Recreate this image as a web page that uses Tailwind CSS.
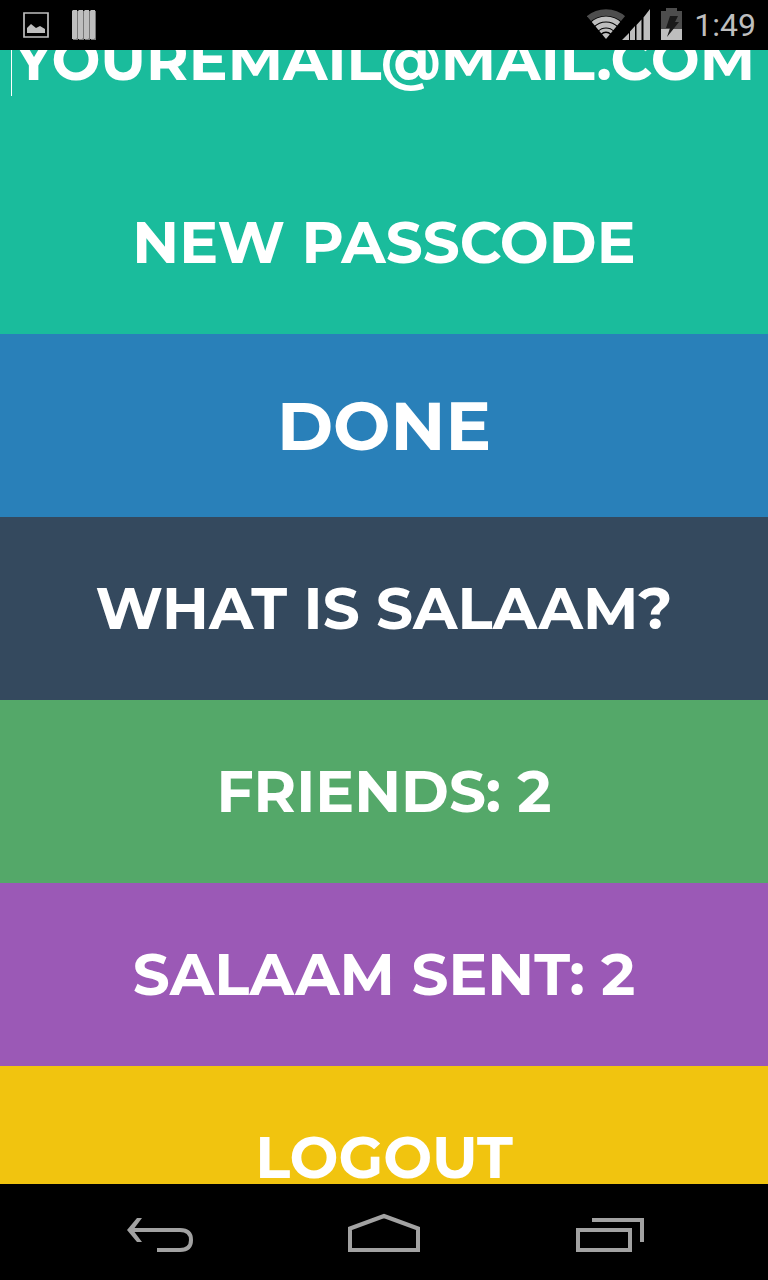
<!DOCTYPE html>
<html lang="en">
<head>
<meta charset="utf-8">
<meta name="viewport" content="width=device-width, initial-scale=1">
<title>Salaam</title>
<script src="https://cdn.jsdelivr.net/npm/@tailwindcss/browser@4"></script>
</head>
<body class="flex h-screen flex-col overflow-hidden bg-black font-['Montserrat','Inter',sans-serif] text-[58px] font-bold text-white">
<header class="flex h-[50px] shrink-0 items-center justify-between pr-3 pl-[23px] text-[#bebebe]">
  <div class="flex items-center gap-[23px]">
    <svg class="h-[26px] w-[26px]" viewBox="0 0 26 26" aria-hidden="true"><path d="M1 1h24v24H1z" fill="none" stroke="currentColor" stroke-width="1.700"/><path d="M4 21v-5l4-4 5 4 4-2 5 3v4z" fill="currentColor"/></svg>
    <svg class="h-[30px] w-[24px]" viewBox="0 0 24 30" aria-hidden="true"><g fill="#777"><path d="M1 1h5v29H1zM7 1h5v29H7zM13 1h5v29h-5zM19 1h5v29h-5z"/></g><g fill="currentColor"><path d="M0 1l1-1h4v28l-1 1H0zM6 1l1-1h4v28l-1 1H6zM12 1l1-1h4v28l-1 1h-4zM18 1l1-1h4v28l-1 1h-4z"/></g></svg>
  </div>
  <div class="flex items-center">
    <svg class="mb-0.5 h-[32px] w-[95px]" viewBox="0 0 95 32" aria-hidden="true">
      <clipPath id="fan"><path d="M19 31L-1 7V0H39V7z"/></clipPath>
      <g clip-path="url(#fan)" fill="none" stroke="currentColor">
        <circle cx="19" cy="31" r="26.500" stroke="#4d4d4d" stroke-width="6.500"/>
        <circle cx="19" cy="31" r="20" stroke-width="4.800"/>
        <circle cx="19" cy="31" r="14" stroke-width="4.800"/>
        <circle cx="19" cy="31" r="9" stroke-width="3.200"/>
        <circle cx="19" cy="31" r="3" stroke-width="6"/>
      </g>
      <path d="M35 32l7-7v7zM43 32V23.500l5-5.500v14zM49.500 32V17l5-5.500V32zM56.500 32V9.500L63 1v31z" fill="currentColor"/>
      <path d="M74 3h5V0h11v3h5v18H74z" fill="#4d4d4d"/>
      <path d="M74 21h21v11H74z" fill="currentColor"/>
      <path d="M83 8h8l-3 6h4L80 29l3-9h-4z" fill="#1a1a1a"/>
    </svg>
    <time class="ml-3 font-['Roboto',sans-serif] text-[32px] leading-10 font-normal">1:49</time>
  </div>
</header>
<main class="min-h-0 flex-1 overflow-hidden">
  <div class="-mt-[82px] flex flex-col">
    <div class="flex h-[183px] items-center bg-[#1abc9c] px-[11px]">
      <input type="email" aria-label="Email" placeholder="YOUREMAIL@MAIL.COM" class="h-[72px] w-full border-l border-white bg-transparent text-center outline-none placeholder:text-white placeholder:opacity-100">
    </div>
    <div class="flex h-[183px] items-center bg-[#1abc9c] px-[11px]">
      <input type="password" aria-label="New passcode" placeholder="NEW PASSCODE" class="h-[72px] w-full bg-transparent text-center outline-none placeholder:text-white placeholder:opacity-100">
    </div>
    <button type="button" class="h-[183px] bg-[#2980b9] text-[68px]">DONE</button>
    <button type="button" class="h-[183px] bg-[#34495e]">WHAT IS SALAAM?</button>
    <button type="button" class="h-[183px] bg-[#54a869]">FRIENDS: 2</button>
    <button type="button" class="h-[183px] bg-[#9b59b6]">SALAAM SENT: 2</button>
    <button type="button" class="h-[183px] bg-[#f1c40f]">LOGOUT</button>
  </div>
</main>
<nav class="flex h-24 shrink-0 items-center justify-center text-[#a2a2a2]" aria-label="System">
  <button type="button" aria-label="Back" class="flex h-full w-56 items-center justify-center"><svg class="h-[40px] w-[68px]" viewBox="0 0 68 40" fill="none" stroke="currentColor" stroke-width="4"><path d="M4 18h50q11 0 11 10t-11 10H31"/><path d="M11 6h5L7 18l9 12h-5L1 18z" fill="currentColor" stroke="none"/></svg></button>
  <button type="button" aria-label="Home" class="flex h-full w-56 items-center justify-center"><svg class="h-[40px] w-[72px]" viewBox="0 0 72 40" fill="none" stroke="currentColor" stroke-width="4"><path d="M2 38V16.500L36 4l34 12.500V38z"/></svg></button>
  <button type="button" aria-label="Recent apps" class="flex h-full w-56 items-center justify-center"><svg class="h-[40px] w-[72px]" viewBox="0 0 72 40" fill="none" stroke="currentColor" stroke-width="4"><path d="M6 18h52v20H6zM20 8h50v22"/></svg></button>
</nav>
</body>
</html>
